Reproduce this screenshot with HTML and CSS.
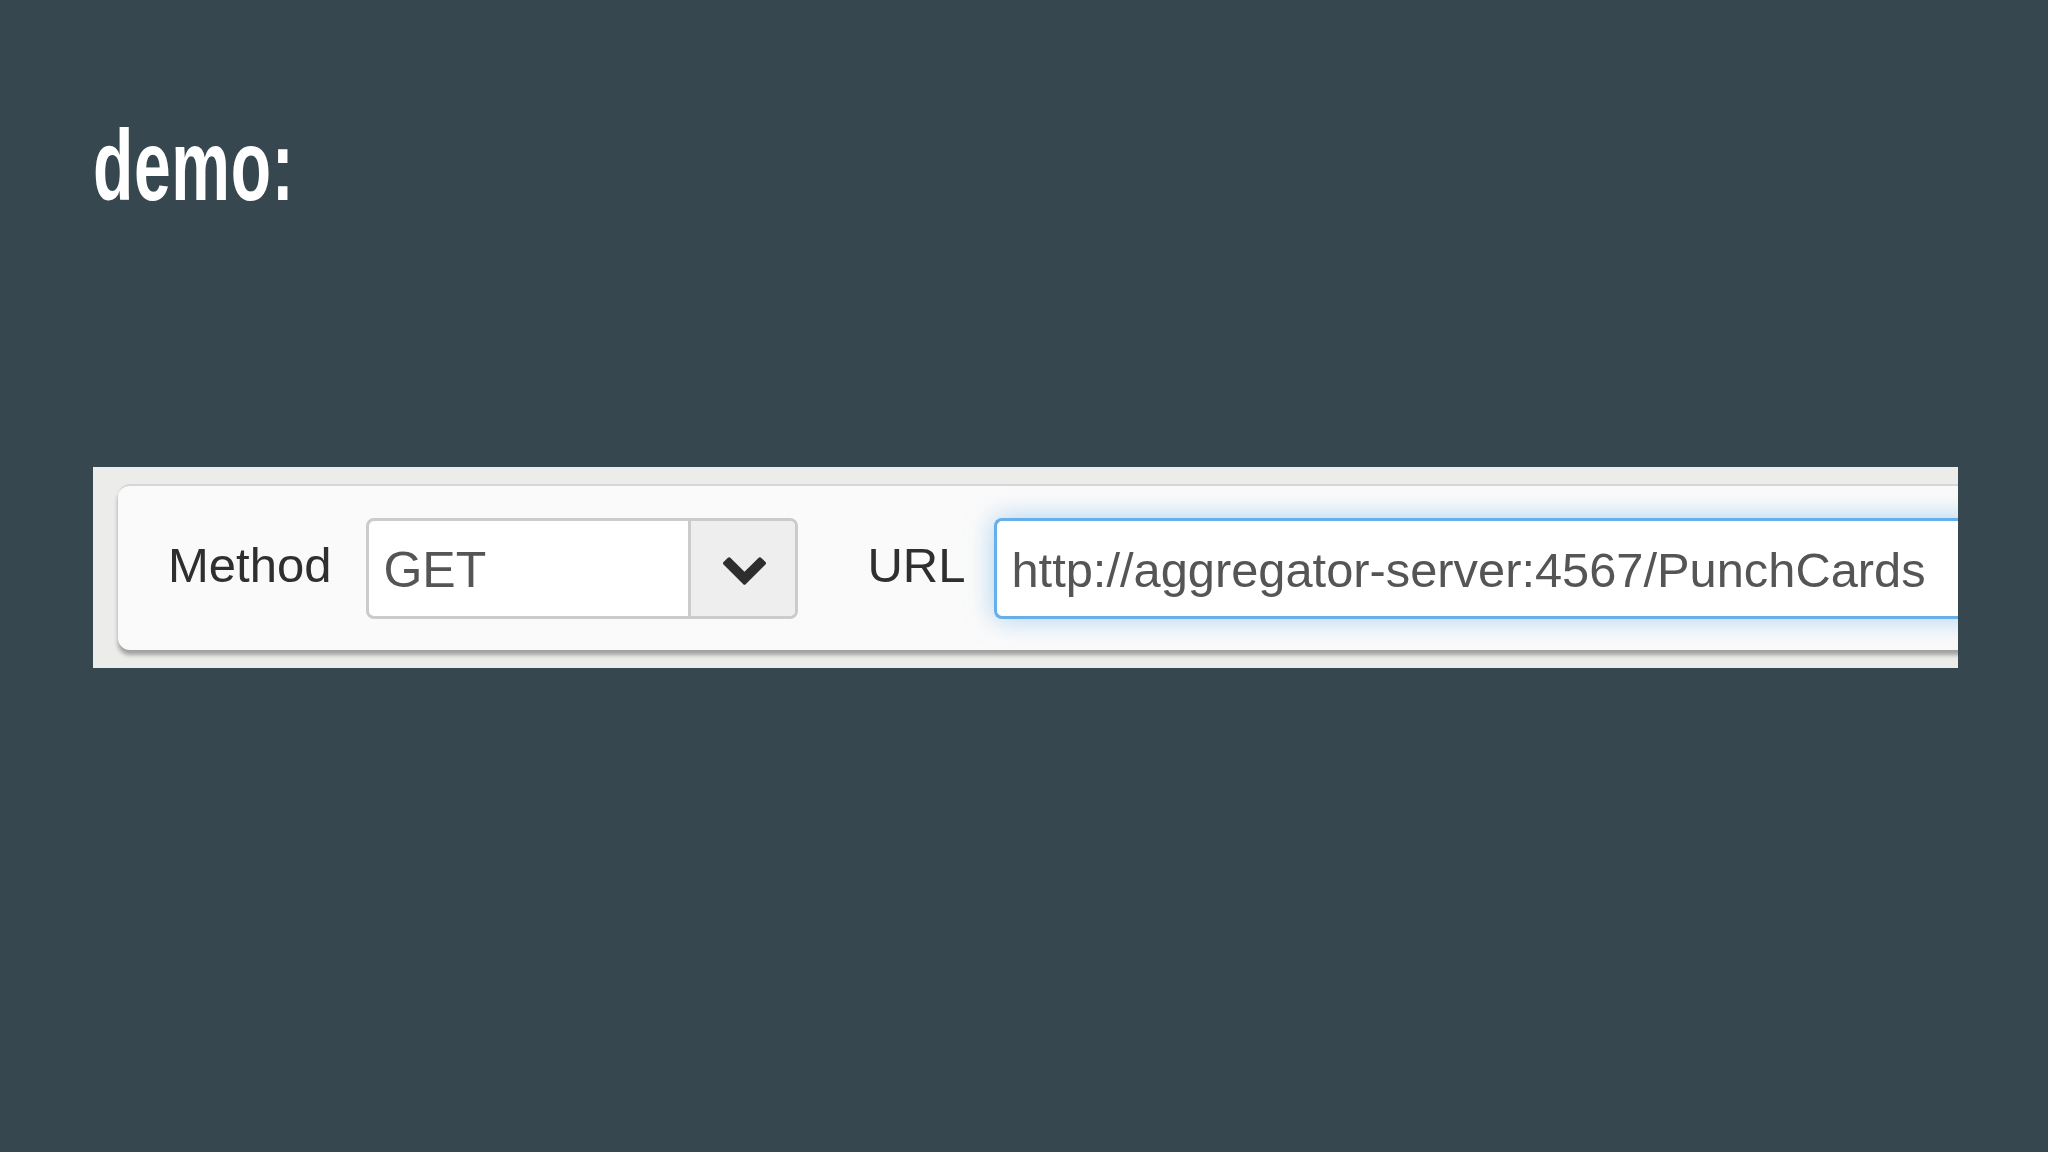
FILE: index.html
```html
<!DOCTYPE html>
<html lang="en">
<head>
<meta charset="utf-8">
<title>demo</title>
<link rel="stylesheet" href="styles.css">
</head>
<body>
<div class="slide">
  <h1 class="title">demo:</h1>
  <div class="shot">
    <div class="card">
      <span class="label label-method">Method</span>
      <div class="select">
        <span class="select-value">GET</span>
        <span class="select-btn">
          <svg class="chev" viewBox="90 384 1612 1184" aria-hidden="true"><path d="M1683 808l-742 741q-19 19-45 19t-45-19l-742-741q-19-19-19-45.5t19-45.5l166-165q19-19 45-19t45 19l531 531 531-531q19-19 45-19t45 19l166 165q19 19 19 45.5t-19 45.5z"/></svg>
        </span>
      </div>
      <span class="label label-url">URL</span>
      <div class="url-input">http://aggregator-server:4567/PunchCards</div>
    </div>
  </div>
</div>
</body>
</html>
```
FILE: styles.css
```css
* { box-sizing: border-box; }
html, body {
  margin: 0;
  padding: 0;
  background: #37474f;
}
.slide {
  width: 2048px;
  height: 1152px;
  padding: 115px 0 0 93px;
  overflow: hidden;
}
.title {
  margin: 0;
  font-family: "Liberation Sans", Arial, sans-serif;
  font-weight: 700;
  font-size: 100px;
  line-height: 100px;
  color: #ffffff;
  transform: scaleX(0.66);
  transform-origin: left center;
  letter-spacing: 1px;
}
.shot {
  margin-top: 252px;
  width: 1865px;
  height: 201px;
  background: #ececea;
  padding: 17px 0 0 25px;
  overflow: hidden;
}
.card {
  width: 1900px;
  height: 166px;
  background: #fafafa;
  border-top: 2px solid #d6d6d6;
  border-radius: 12px 0 0 12px;
  box-shadow: 0 5px 4px rgba(0, 0, 0, 0.32);
  display: flex;
  align-items: center;
  padding-left: 50px;
  font-family: "Liberation Sans", Arial, sans-serif;
}
.label {
  font-size: 49px;
  color: #2f2f2f;
  line-height: 1;
  margin-top: -6px;
}
.label-method { margin-right: 35px; }
.label-url { margin-left: 69px; margin-right: 29px; }
.select {
  display: flex;
  width: 432px;
  height: 101px;
  border: 3px solid #cbcbcb;
  border-radius: 8px;
  overflow: hidden;
  background: #ffffff;
}
.select-value {
  width: 322px;
  border-right: 3px solid #cbcbcb;
  display: flex;
  align-items: center;
  padding-left: 14px;
  padding-top: 4px;
  font-size: 50px;
  color: #555555;
}
.select-btn {
  flex: 1;
  background: #eeeeee;
  display: flex;
  align-items: center;
  justify-content: center;
  padding-top: 2px;
  padding-left: 2px;
}
.chev {
  width: 43px;
  height: 32px;
  fill: #2d2d2d;
}
.url-input {
  flex: 1;
  height: 101px;
  border: 3px solid #66afe9;
  border-right: none;
  border-radius: 8px 0 0 8px;
  background: #ffffff;
  box-shadow: 0 0 26px rgba(102, 175, 233, 0.55);
  display: flex;
  align-items: center;
  padding-left: 14px;
  padding-top: 4px;
  font-size: 48.8px;
  color: #555555;
  white-space: nowrap;
}
```
